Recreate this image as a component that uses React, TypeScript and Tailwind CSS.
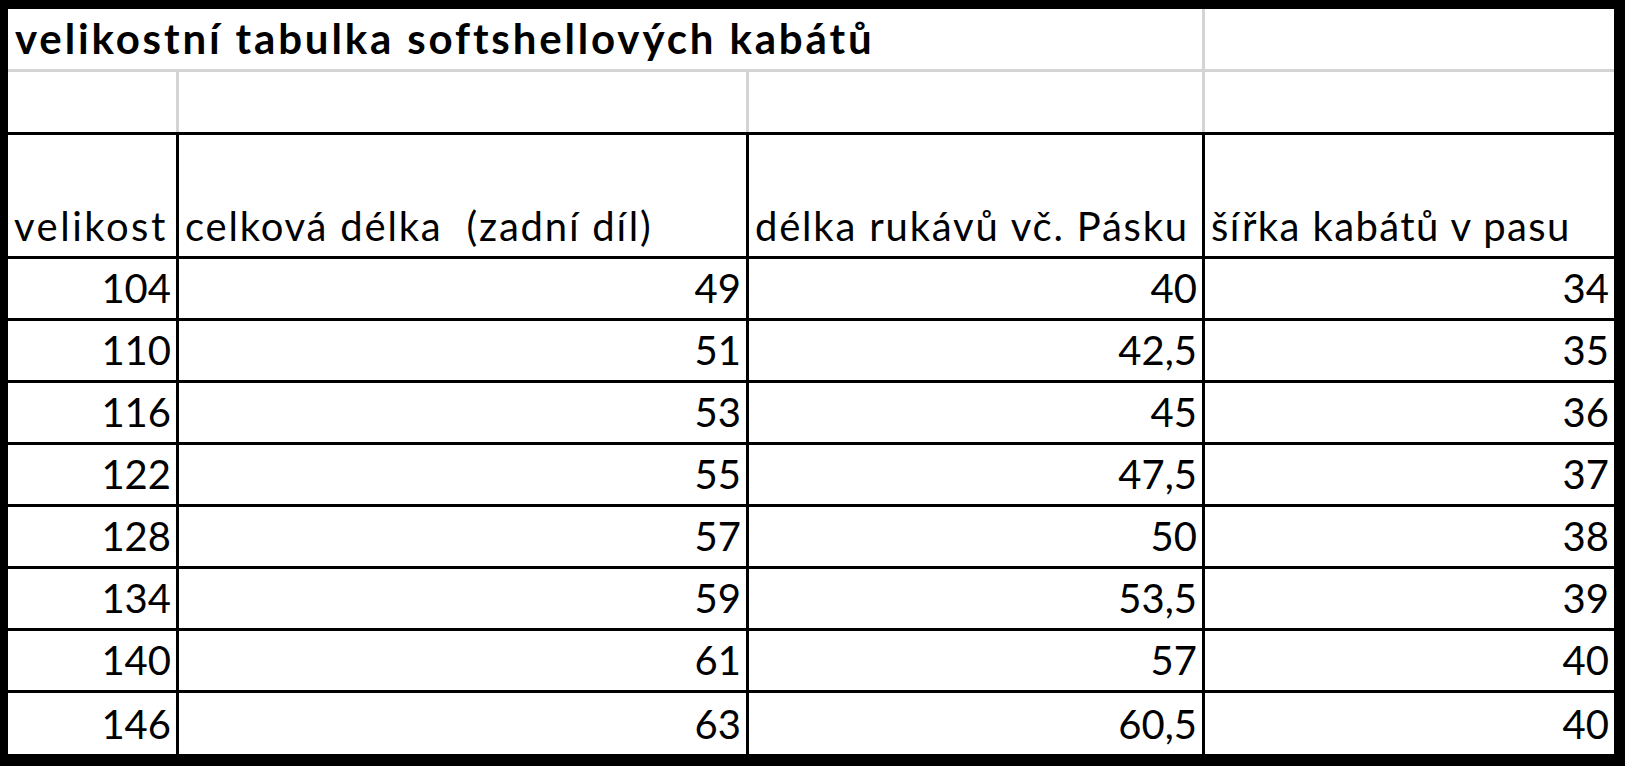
const rows = [
  ['104', '49', '40', '34'],
  ['110', '51', '42,5', '35'],
  ['116', '53', '45', '36'],
  ['122', '55', '47,5', '37'],
  ['128', '57', '50', '38'],
  ['134', '59', '53,5', '39'],
  ['140', '61', '57', '40'],
  ['146', '63', '60,5', '40'],
];

const headers = [
  { text: 'velikost', track: 'tracking-[2.5px]' },
  { text: 'celková délka  (zadní díl)', track: 'tracking-[1.8px]' },
  { text: 'délka rukávů vč. Pásku', track: 'tracking-[1.8px]' },
  { text: 'šířka kabátů v pasu', track: 'tracking-[1.4px]' },
];

// column widths include the 3px right border
const colW = ['w-[171px]', 'w-[570px]', 'w-[456px]', 'flex-1'];

export default function App() {
  return (
    <div
      className="w-[1625px] h-[766px] bg-white text-black border-l-[8px] border-t-[9px] border-r-[11px] border-b-[12px] border-black flex flex-col overflow-hidden"
      style={{ fontFamily: 'Lato, "Open Sans", sans-serif' }}
    >
      {/* title row */}
      <div className="h-[63px] flex border-b-[3px] border-[#d4d4d4]">
        <div className="w-[1197px] border-r-[3px] border-[#d4d4d4] flex items-end pl-[7px] pb-[10px]">
          <span className="text-[42px] leading-none font-bold tracking-[2.85px] whitespace-pre">velikostní tabulka softshellových kabátů</span>
        </div>
        <div className="flex-1" />
      </div>

      {/* empty row */}
      <div className="h-[63px] flex border-b-[3px] border-black">
        {colW.map((w, i) => (
          <div key={i} className={`${w} ${i < 3 ? 'border-r-[3px] border-[#d4d4d4]' : ''}`} />
        ))}
      </div>

      {/* header row */}
      <div className="h-[124px] flex border-b-[3px] border-black">
        {headers.map((h, i) => (
          <div
            key={i}
            className={`${colW[i]} ${i < 3 ? 'border-r-[3px] border-black' : ''} flex items-end pl-[6px] pb-[10px]`}
          >
            <span className={`text-[40px] leading-none whitespace-pre ${h.track}`}>{h.text}</span>
          </div>
        ))}
      </div>

      {/* data rows */}
      {rows.map((r, ri) => (
        <div
          key={ri}
          className={`flex ${ri < rows.length - 1 ? 'h-[62px] border-b-[3px] border-black' : 'flex-1'}`}
        >
          {r.map((v, i) => (
            <div
              key={i}
              className={`${colW[i]} ${i < 3 ? 'border-r-[3px] border-black' : ''} flex items-end justify-end pr-[5px] pb-[10px]`}
            >
              <span className="text-[40px] leading-none">{v}</span>
            </div>
          ))}
        </div>
      ))}
    </div>
  );
}
